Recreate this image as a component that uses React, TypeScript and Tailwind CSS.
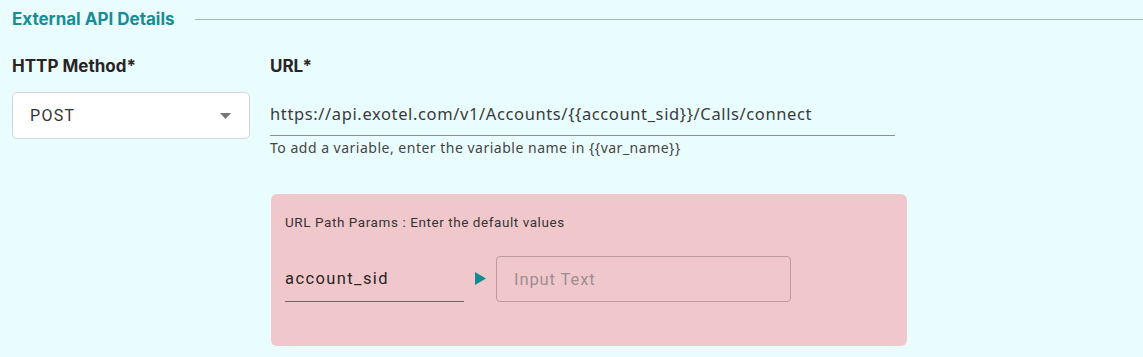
import React from "react";

export default function App() {
  const bold = { fontFamily: "Inter, 'Noto Sans', sans-serif" };
  const noto = { fontFamily: "'Noto Sans', Roboto, sans-serif" };
  return (
    <div className="w-[1143px] h-[357px] bg-[#eafdfe] overflow-hidden" style={{ fontFamily: "Roboto, 'Noto Sans', sans-serif" }}>
      <div className="flex items-center pl-3 pt-[8px] h-[30px]">
        <span className="text-[17px] font-bold text-[#178d96] leading-[22px]" style={bold}>
          External API Details
        </span>
        <div className="flex-1 ml-[20px] h-px bg-[#aab8bc]" />
      </div>

      <div className="flex pl-3 gap-[20px] mt-[24px]">
        <div className="w-[238px] flex flex-col">
          <div className="text-[17px] font-bold text-[#2a2323] leading-[24px] h-[24px]" style={bold}>
            HTTP Method*
          </div>
          <div className="mt-[14px] h-[47px] bg-white border border-[#d3d6e2] rounded-[5px] flex items-center justify-between pl-[17px] pr-[18px]">
            <span className="text-[16px] text-[#333333] tracking-[1.3px]">POST</span>
            <svg width="11" height="6" viewBox="0 0 11 6">
              <path d="M0 0 L11 0 L5.5 6 Z" fill="#777777" />
            </svg>
          </div>
        </div>

        <div className="flex flex-col">
          <div className="text-[17px] font-bold text-[#2a2323] leading-[24px] h-[24px]" style={bold}>
            URL*
          </div>
          <div className="w-[625px] mt-[25px] border-b border-[#8f8f8f] pb-[10px] text-[16.5px] text-[#3a3a3a] leading-[22px] tracking-[0.62px]" style={noto}>
            https://api.exotel.com/v1/Accounts/{"{{account_sid}}"}/Calls/connect
          </div>
          <div className="text-[14px] text-[#444444] leading-[18px] mt-[3px] tracking-[0.5px]" style={noto}>
            To add a variable, enter the variable name in {"{{var_name}}"}
          </div>

          <div className="mt-[37px] ml-px w-[636px] h-[152px] bg-[#f0c8cc] rounded-[6px] pl-[14px] pt-[19px]">
            <div className="text-[13.5px] text-[#3a3335] leading-[18px] tracking-[0.57px]">
              URL Path Params : Enter the default values
            </div>
            <div className="flex items-center mt-[25px]">
              <div className="w-[179px] h-[46px] border-b border-[#6f6466] flex items-center pt-[2px]">
                <span className="text-[16.5px] text-[#2a2426] tracking-[1.4px]">account_sid</span>
              </div>
              <svg className="ml-[11px] mt-[-1px]" width="11" height="13" viewBox="0 0 11 13">
                <path d="M0 0 L11 6.5 L0 13 Z" fill="#0f8d95" />
              </svg>
              <div className="ml-[10px] w-[295px] h-[46px] border border-[#bb999e] rounded-[4px] flex items-center pl-[17px] pt-[2px]">
                <span className="text-[16.5px] text-[#9e8e91] tracking-[0.9px]">Input Text</span>
              </div>
            </div>
          </div>
        </div>
      </div>
    </div>
  );
}
